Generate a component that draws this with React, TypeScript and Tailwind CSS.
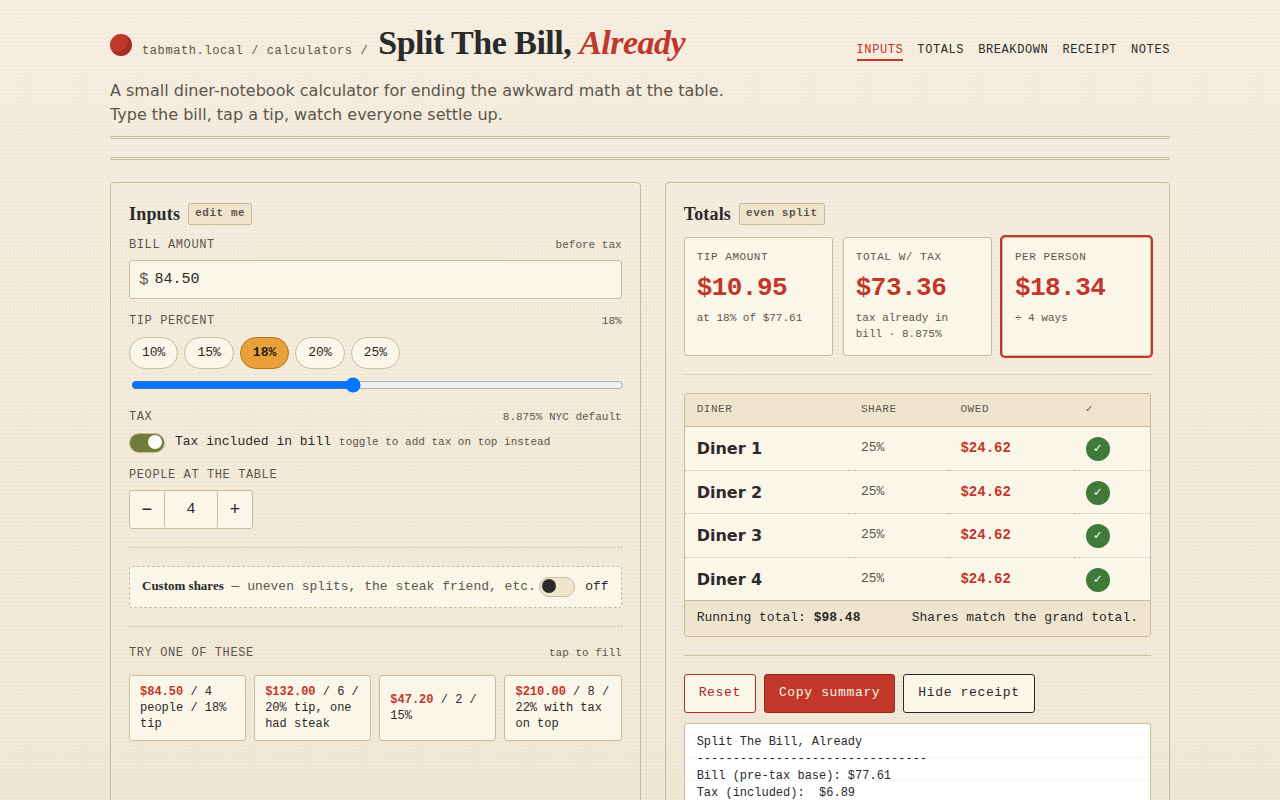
const navItems = ['Inputs', 'Totals', 'Breakdown', 'Receipt', 'Notes'];

const tips = [10, 15, 18, 20, 25];

const presets = [
  { amount: '$84.50', rest: ' / 4 people / 18% tip' },
  { amount: '$132.00', rest: ' / 6 / 20% tip, one had steak' },
  { amount: '$47.20', rest: ' / 2 / 15%' },
  { amount: '$210.00', rest: ' / 8 / 22% with tax on top' },
];

const stats = [
  { label: 'Tip amount', value: '$10.95', note: 'at 18% of $77.61', active: false },
  { label: 'Total w/ tax', value: '$73.36', note: 'tax already in bill · 8.875%', active: false },
  { label: 'Per person', value: '$18.34', note: '÷ 4 ways', active: true },
];

const diners = [
  { name: 'Diner 1', share: '25%', owed: '$24.62' },
  { name: 'Diner 2', share: '25%', owed: '$24.62' },
  { name: 'Diner 3', share: '25%', owed: '$24.62' },
  { name: 'Diner 4', share: '25%', owed: '$24.62' },
];

const receipt = `Split The Bill, Already
--------------------------------
Bill (pre-tax base): $77.61
Tax (included):  $6.89`;

const mono = "font-['Liberation_Mono',monospace]";
const serif = "font-['Liberation_Serif',serif]";
const label = 'text-xs leading-4 tracking-wider uppercase text-[#5c564c]';
const hint = 'text-[11px] leading-4 text-[#5c564c]';
const dotted = 'my-[18px] border-t border-dotted border-[#c9bd9a]';
const toggle =
  "h-5 w-9 shrink-0 cursor-pointer appearance-none rounded-full border border-[#c9bd9a] bg-[#efe4ce] px-[2px] pt-px before:block before:size-[14px] before:rounded-full before:bg-[#2a2a2a] before:content-[''] checked:bg-[#707c3a] checked:before:translate-x-4 checked:before:bg-white";
const button = 'h-[39px] rounded-[3px] border px-3.5 text-[13px] tracking-wider';

function PanelTitle({ title, badge }: { title: string; badge: string }) {
  return (
    <div className="mb-[11px] flex items-center gap-2">
      <h2 className={`${serif} text-lg leading-6 font-bold tracking-[0.01em]`}>{title}</h2>
      <span className="rounded-[2px] border border-[#c9bd9a] bg-[#efe4ce] px-1.5 pt-px pb-[3px] text-[11px] leading-4 font-bold tracking-wider text-[#5c564c]">
        {badge}
      </span>
    </div>
  );
}

function Header() {
  return (
    <header className="border-b-3 border-double border-[#c9bd9a] pb-[9px]">
      <div className="flex items-end justify-between">
        <div className="flex items-center gap-2.5">
          <span className="mt-1 size-[22px] rounded-full bg-[#c1372a] shadow-[inset_-4px_-4px_0_rgba(0,0,0,0.15)]" />
          <div className="flex items-baseline gap-2.5">
            <span className={`${mono} text-xs tracking-wider text-[#5c564c]`}>tabmath.local / calculators /</span>
            <h1 className={`${serif} text-[34px] leading-[38px] font-bold tracking-[-0.015em]`}>
              Split The Bill, <em className="text-[#c1372a]">Already</em>
            </h1>
          </div>
        </div>
        <nav className={`${mono} mb-px flex gap-3.5 text-xs leading-[18px] tracking-wider uppercase`}>
          {navItems.map((item, i) => (
            <a
              key={item}
              href={`#${item.toLowerCase()}`}
              className={i === 0 ? 'border-b-2 border-[#c1372a] text-[#c1372a]' : 'border-b-2 border-transparent'}
            >
              {item}
            </a>
          ))}
        </nav>
      </div>
      <p className="mt-[17px] max-w-[640px] text-base leading-6 text-[#5c564c]">
        A small diner-notebook calculator for ending the awkward math at the table. Type the bill, tap a tip, watch
        everyone settle up.
      </p>
    </header>
  );
}

function Inputs() {
  return (
    <section id="inputs" className={`${mono} rounded border border-[#c9bd9a] px-[18px] pt-[19px] pb-[18px]`}>
      <PanelTitle title="Inputs" badge="edit me" />

      <div className="flex items-baseline justify-between">
        <label htmlFor="bill" className={label}>Bill amount</label>
        <span className={hint}>before tax</span>
      </div>
      <div className="mt-[7px] flex h-[39px] items-center gap-1.5 rounded-[3px] border border-[#c9bd9a] bg-[#faf6e9] px-[9px]">
        <span className="text-base leading-5 text-[#5c564c]">$</span>
        <input id="bill" defaultValue="84.50" className="min-w-0 flex-1 bg-transparent pt-0.5 text-[15px] outline-none" />
      </div>

      <div className="mt-3.5 flex items-baseline justify-between">
        <label htmlFor="tip" className={label}>Tip percent</label>
        <span className={hint}>18%</span>
      </div>
      <div className="mt-2 flex gap-1.5">
        {tips.map((tip) => (
          <button
            key={tip}
            type="button"
            className={`h-8 rounded-full border px-3 text-[13px] ${
              tip === 18 ? 'border-[#b5761c] bg-[#e8a13a] font-bold text-[#1f1a10]' : 'border-[#c9bd9a] bg-[#faf6e9]'
            }`}
          >
            {tip}%
          </button>
        ))}
      </div>
      <input id="tip" type="range" min={0} max={40} defaultValue={18} className="m-[2px] mt-2 block h-4 w-full" />

      <div className="mt-4 flex items-baseline justify-between">
        <span className={label}>Tax</span>
        <span className={hint}>8.875% NYC default</span>
      </div>
      <div className="mt-2 flex items-center">
        <input id="tax" type="checkbox" defaultChecked className={toggle} />
        <label htmlFor="tax" className="ml-2.5 pb-0.5 text-[13px] leading-[18px]">Tax included in bill</label>
        <span className={`${hint} ml-2 pb-0.5`}>toggle to add tax on top instead</span>
      </div>

      <label htmlFor="people" className={`${label} mt-3.5 block`}>People at the table</label>
      <div className="mt-[7px] flex h-[39px] w-fit overflow-hidden rounded-[3px] border border-[#c9bd9a] bg-[#faf6e9]">
        <button type="button" aria-label="Fewer people" className="w-[34px] text-lg">−</button>
        <input
          id="people"
          defaultValue="4"
          className="w-[54px] rounded-[3px] border-x border-[#c9bd9a] pt-0.5 text-center text-[15px] outline-none"
        />
        <button type="button" aria-label="More people" className="w-[34px] text-lg">+</button>
      </div>

      <hr className={dotted} />

      <div className="flex items-center justify-between rounded-[3px] border border-dashed border-[#c9bd9a] bg-[#faf6e9] px-3 pt-[9px] pb-2.5 text-[13px] leading-5">
        <span className="whitespace-nowrap text-[#5c564c]">
          <strong className={`${serif} text-[#2a2a2a]`}>Custom shares</strong> — uneven splits, the steak friend, etc.
        </span>
        <label className="flex items-center gap-2.5">
          <input type="checkbox" className={toggle} />
          off
        </label>
      </div>

      <hr className={dotted} />

      <div className="flex items-baseline justify-between">
        <span className={label}>Try one of these</span>
        <span className={hint}>tap to fill</span>
      </div>
      <div className="mt-3.5 grid grid-cols-4 gap-2">
        {presets.map((p) => (
          <button
            key={p.amount}
            type="button"
            className="rounded-[3px] border border-[#c9bd9a] bg-[#faf6e9] px-2.5 py-2 text-left text-xs leading-4"
          >
            <strong className="text-[#c1372a]">{p.amount}</strong>
            {p.rest}
          </button>
        ))}
      </div>
    </section>
  );
}

function Totals() {
  return (
    <section id="totals" className={`${mono} rounded border border-[#c9bd9a] px-[18px] pt-[19px] pb-[18px]`}>
      <PanelTitle title="Totals" badge="even split" />

      <div className="grid grid-cols-3 gap-2.5">
        {stats.map((s) => (
          <div
            key={s.label}
            className={`rounded-[3px] border border-[#c9bd9a] bg-[#faf6e9] px-3 pt-[11px] pb-[13px] ${
              s.active ? 'ring-2 ring-[#c1372a]' : ''
            }`}
          >
            <div className="text-[11px] leading-4 tracking-wider text-[#5c564c] uppercase">{s.label}</div>
            <div className="mt-[7px] mb-1.5 text-[26px] leading-8 font-bold tracking-[-0.02em] text-[#c1372a]">
              {s.value}
            </div>
            <div className={hint}>{s.note}</div>
          </div>
        ))}
      </div>

      <hr className={dotted} />

      <div className="overflow-hidden rounded-[3px] border border-[#c9bd9a] bg-[#faf6e9]">
        <table id="breakdown" className="w-full table-fixed text-left">
          <thead className="bg-[#efe4ce] text-[11px] leading-4 tracking-wider text-[#5c564c] uppercase">
            <tr className="h-8 border-b border-[#c9bd9a] *:px-3 *:pb-0.5 *:font-normal">
              <th className="w-[35.3%]">Diner</th>
              <th className="w-[21.4%]">Share</th>
              <th className="w-[26.9%]">Owed</th>
              <th>✓</th>
            </tr>
          </thead>
          <tbody>
            {diners.map((d) => (
              <tr
                key={d.name}
                className="border-b border-dotted border-[#c9bd9a] *:px-3 last:border-solid odd:h-11 even:h-[43px]"
              >
                <td className="pt-0.5 font-['DejaVu_Sans',sans-serif] text-base font-bold">{d.name}</td>
                <td className="text-[13px] text-[#5c564c]">{d.share}</td>
                <td className="text-sm font-bold text-[#c1372a]">{d.owed}</td>
                <td>
                  <button
                    type="button"
                    aria-label={`${d.name} paid`}
                    className="mt-0.5 block size-6 rounded-full bg-[#3f7a3a] text-[13px] leading-5 text-white"
                  >
                    ✓
                  </button>
                </td>
              </tr>
            ))}
          </tbody>
        </table>
        <div className="flex justify-between bg-[#efe4ce] px-3 pt-[7px] pb-2 text-[13px] leading-5">
          <span>
            Running total: <strong>$98.48</strong>
          </span>
          <span>Shares match the grand total.</span>
        </div>
      </div>

      <hr className="my-[18px] border-t border-[#c9bd9a]" />

      <div className="flex gap-2">
        <button type="button" className={`${button} border-[#a52a2a] bg-[#faf6e9] text-[#a52a2a]`}>Reset</button>
        <button type="button" className={`${button} border-[#96281f] bg-[#c1372a] text-[#faf6e9]`}>Copy summary</button>
        <button type="button" className={`${button} border-[#2a2a2a] bg-[#faf6e9]`}>Hide receipt</button>
      </div>

      <pre
        id="receipt"
        className={`${mono} mt-2.5 min-h-72 rounded-[3px] border border-[#c9bd9a] bg-white bg-[linear-gradient(#f5f5f5_1px,transparent_1px)] bg-[size:100%_23px] bg-[position:0_10px] px-3 py-2.5 text-xs leading-[17px]`}
      >
        {receipt}
      </pre>
    </section>
  );
}

export default function App() {
  return (
    <div className="min-h-screen bg-[radial-gradient(rgba(120,90,40,0.04)_1px,transparent_1px),radial-gradient(rgba(120,90,40,0.03)_1px,transparent_1px),linear-gradient(#f6eee1,#f0e6d3)] bg-[size:4px_4px,7px_7px,100%_100%] font-['DejaVu_Sans',sans-serif] text-[#2a2a2a]">
      <div className="mx-auto max-w-[1100px] px-5 pt-6 pb-10">
        <Header />
        <div className="mt-[18px] border-t-3 border-double border-[#c9bd9a]" />
        <main className="mt-[22px] grid grid-cols-[1.05fr_1fr] gap-6">
          <Inputs />
          <Totals />
        </main>
      </div>
    </div>
  );
}
